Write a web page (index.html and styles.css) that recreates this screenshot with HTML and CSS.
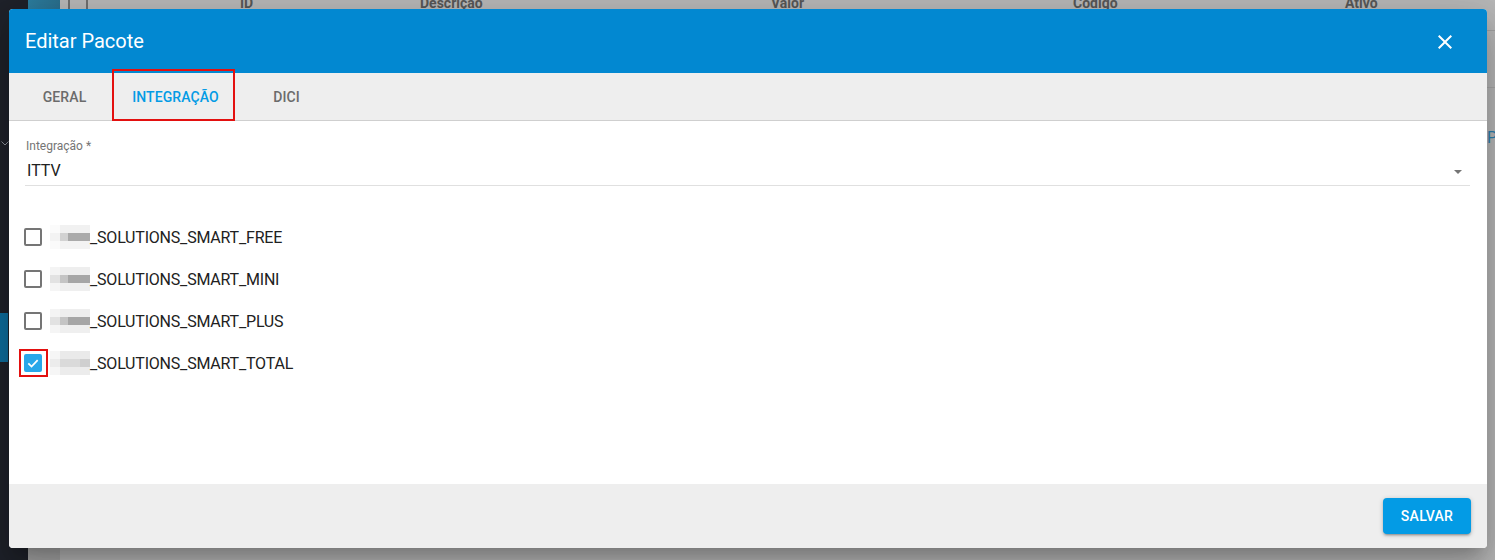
FILE: index.html
```html
<!DOCTYPE html>
<html lang="pt-BR">
<head>
<meta charset="utf-8">
<title>Editar Pacote</title>
<link rel="stylesheet" href="styles.css">
</head>
<body>
<div class="page">
  <aside class="sidebar">
    <svg class="chev" width="8" height="5" viewBox="0 0 8 5"><path d="M0.5 0.5 L4 4 L7.5 0.5" fill="none" stroke="#8c9099" stroke-width="1"/></svg>
    <div class="side-item"></div>
  </aside>
  <div class="rail">
    <div class="rail-top"></div>
  </div>
  <main class="main">
    <div class="thead">
      <div class="tcell c0"></div>
      <div class="tcell c1"></div>
      <div class="tcols">
        <span class="col w1">ID</span>
        <span class="col w2">Descrição</span>
        <span class="col w3">Valor</span>
        <span class="col w4">Código</span>
        <span class="col">Ativo</span>
      </div>
    </div>
    <div class="trow"></div>
    <div class="link-row"><span class="link">Pacotes</span></div>
  </main>
</div>

<div class="modal">
  <header class="modal-head">
    <h1 class="modal-title">Editar Pacote</h1>
    <svg class="close" width="24" height="24" viewBox="0 0 24 24"><path fill="#fff" d="M19 6.41L17.59 5 12 10.59 6.41 5 5 6.41 10.59 12 5 17.59 6.41 19 12 13.41 17.59 19 19 17.59 13.41 12z"/></svg>
  </header>
  <nav class="tabs">
    <div class="tab">GERAL</div>
    <div class="tab active">INTEGRAÇÃO</div>
    <div class="tab">DICI</div>
    <div class="mark mark-tab"></div>
  </nav>
  <section class="content">
    <div class="field">
      <label class="field-label">Integração *</label>
      <div class="field-input">
        <span>ITTV</span>
        <span class="arrow"></span>
      </div>
    </div>
    <ul class="checks">
      <li class="check-row">
        <span class="box"></span>
        <span class="redact r1"><i></i><i></i><i></i></span>
        <span class="check-label">_SOLUTIONS_SMART_FREE</span>
      </li>
      <li class="check-row">
        <span class="box"></span>
        <span class="redact r2"><i></i><i></i><i></i></span>
        <span class="check-label">_SOLUTIONS_SMART_MINI</span>
      </li>
      <li class="check-row">
        <span class="box"></span>
        <span class="redact r2"><i></i><i></i><i></i></span>
        <span class="check-label">_SOLUTIONS_SMART_PLUS</span>
      </li>
      <li class="check-row">
        <span class="box checked">
          <svg width="14" height="14" viewBox="0 0 24 24"><path fill="none" stroke="#fff" stroke-width="3" d="M4 12.5 L9.5 18 L20 7"/></svg>
          <span class="mark mark-check"></span>
        </span>
        <span class="redact r3"><i></i><i></i><i></i></span>
        <span class="check-label">_SOLUTIONS_SMART_TOTAL</span>
      </li>
    </ul>
  </section>
  <footer class="modal-foot">
    <button class="btn">SALVAR</button>
  </footer>
</div>
</body>
</html>
```

FILE: styles.css
```css
* { box-sizing: border-box; }
html, body {
  margin: 0;
  padding: 0;
  width: 1495px;
  height: 560px;
  overflow: hidden;
  font-family: Roboto, "Liberation Sans", Arial, sans-serif;
}
body { position: relative; background: #b8b8b8; }

.page {
  display: flex;
  width: 1495px;
  height: 560px;
}
.sidebar {
  flex: none;
  width: 28px;
  background: #1f222a;
  padding-top: 141px;
}
.chev { display: block; margin-left: 1px; }
.side-item {
  margin-top: 167px;
  height: 49px;
  width: 8px;
  background: #0e6e9e;
}
.rail {
  flex: none;
  width: 32px;
  background: #a6a6a6;
}
.rail-top {
  height: 30px;
  background: linear-gradient(90deg, #2c7d9f, #2a6f8e);
}
.main {
  flex: 1;
  min-width: 0;
  overflow: hidden;
  background: #b8b8b8;
}
.thead {
  display: flex;
  height: 31px;
  border-bottom: 1px solid #a2a2a2;
}
.tcell { flex: none; }
.tcell.c0 { width: 10px; border-right: 2px solid #6f6f6f; }
.tcell.c1 { width: 18px; border-right: 2px solid #6f6f6f; }
.tcols {
  display: flex;
  padding-left: 152px;
  margin-top: -4px;
  font-size: 14px;
  line-height: 14px;
  font-weight: 700;
  color: #575757;
  white-space: nowrap;
}
.col { flex: none; }
.col.w1 { width: 180px; }
.col.w2 { width: 351px; }
.col.w3 { width: 302px; }
.col.w4 { width: 272px; }
.trow {
  height: 57px;
  border-bottom: 1px solid #a8a8a8;
}
.link-row {
  padding-left: 1427px;
  padding-top: 40px;
  font-size: 16px;
  color: #2a7fb0;
  white-space: nowrap;
}

/* modal */
.modal {
  position: absolute;
  left: 9px;
  top: 9px;
  width: 1478px;
  height: 539px;
  display: flex;
  flex-direction: column;
  border-radius: 4px;
  overflow: hidden;
  background: #fff;
  box-shadow: 0 11px 15px -7px rgba(0,0,0,.2), 0 24px 38px 3px rgba(0,0,0,.14), 0 9px 46px 8px rgba(0,0,0,.12);
}
.modal-head {
  height: 64px;
  flex: none;
  background: #0288d1;
  display: flex;
  align-items: center;
  justify-content: space-between;
  padding: 0 30px 0 16px;
}
.modal-title {
  margin: 0;
  font-size: 20px;
  font-weight: 400;
  color: #fff;
}
.close { display: block; margin-top: 1px; }

.tabs {
  position: relative;
  flex: none;
  height: 48px;
  background: #eeeeee;
  border-bottom: 1px solid #cfcfcf;
  display: flex;
}
.tab {
  width: 111px;
  display: flex;
  align-items: center;
  justify-content: center;
  font-size: 14px;
  font-weight: 500;
  color: #6b6b6b;
  letter-spacing: 0.1px;
}
.tab.active { color: #039be5; }
.mark {
  position: absolute;
  border: 2px solid #e3100f;
}
.mark-tab {
  left: 103px;
  top: -4px;
  width: 123px;
  height: 52px;
}

.content {
  flex: 1;
  padding: 18px 17px 0 16px;
}
.field-label {
  display: block;
  font-size: 12px;
  line-height: 14px;
  color: #757575;
  padding-left: 1px;
}
.field-input {
  margin-top: 8px;
  display: flex;
  align-items: center;
  justify-content: space-between;
  font-size: 16px;
  line-height: 20px;
  color: #212121;
  padding: 0 8px 4px 2px;
  border-bottom: 1px solid #e0e0e0;
}
.arrow {
  width: 0;
  height: 0;
  border-left: 4px solid transparent;
  border-right: 4px solid transparent;
  border-top: 4px solid #757575;
  margin-top: 1px;
}

.checks {
  list-style: none;
  margin: 30px 0 0 0;
  padding: 0;
}
.check-row {
  height: 42px;
  display: flex;
  align-items: center;
}
.box {
  position: relative;
  flex: none;
  width: 18px;
  height: 18px;
  margin-left: -1px;
  border: 2px solid #757575;
  border-radius: 2px;
  display: flex;
  align-items: center;
  justify-content: center;
}
.box.checked {
  background: #29a7e9;
  border-color: #29a7e9;
}
.mark-check {
  left: -7px;
  top: -7px;
  width: 29px;
  height: 28px;
}
.redact {
  display: flex;
  flex-direction: column;
  flex: none;
  width: 40px;
  height: 24px;
  margin-left: 8px;
}
.redact i { display: block; height: 8px; }
.r1 i:nth-child(1) { background: linear-gradient(90deg, #fbfbfb 0 25%, #f1f1f1 25% 100%); }
.r1 i:nth-child(2) { background: linear-gradient(90deg, #f3f3f3 0 25%, #d2d2d2 25% 45%, #aaaaaa 45% 100%); }
.r1 i:nth-child(3) { background: linear-gradient(90deg, #fafafa 0 25%, #f3f3f3 25% 100%); }
.r2 i:nth-child(1) { background: linear-gradient(90deg, #f4f4f4 0 25%, #eeeeee 25% 100%); }
.r2 i:nth-child(2) { background: linear-gradient(90deg, #e2e2e2 0 25%, #c4c4c4 25% 45%, #a6a6a6 45% 100%); }
.r2 i:nth-child(3) { background: linear-gradient(90deg, #f5f5f5 0 25%, #efefef 25% 100%); }
.r3 i:nth-child(1) { background: linear-gradient(90deg, #f6f6f6 0 25%, #eaeaea 25% 100%); }
.r3 i:nth-child(2) { background: linear-gradient(90deg, #ececec 0 25%, #dadada 25% 75%, #cfcfcf 75% 100%); }
.r3 i:nth-child(3) { background: linear-gradient(90deg, #f6f6f6 0 25%, #ececec 25% 100%); }
.check-label {
  font-size: 16px;
  color: #212121;
  letter-spacing: -0.2px;
}

.modal-foot {
  flex: none;
  height: 64px;
  background: #eeeeee;
  display: flex;
  align-items: center;
  justify-content: flex-end;
  padding: 0 16px;
}
.btn {
  width: 88px;
  height: 36px;
  border: none;
  border-radius: 4px;
  background: #039be5;
  color: #fff;
  font-family: Roboto, "Liberation Sans", Arial, sans-serif;
  font-size: 14px;
  font-weight: 500;
  letter-spacing: 0.3px;
  box-shadow: 0 1px 5px rgba(0,0,0,.2), 0 2px 2px rgba(0,0,0,.14), 0 3px 1px -2px rgba(0,0,0,.12);
}
```
